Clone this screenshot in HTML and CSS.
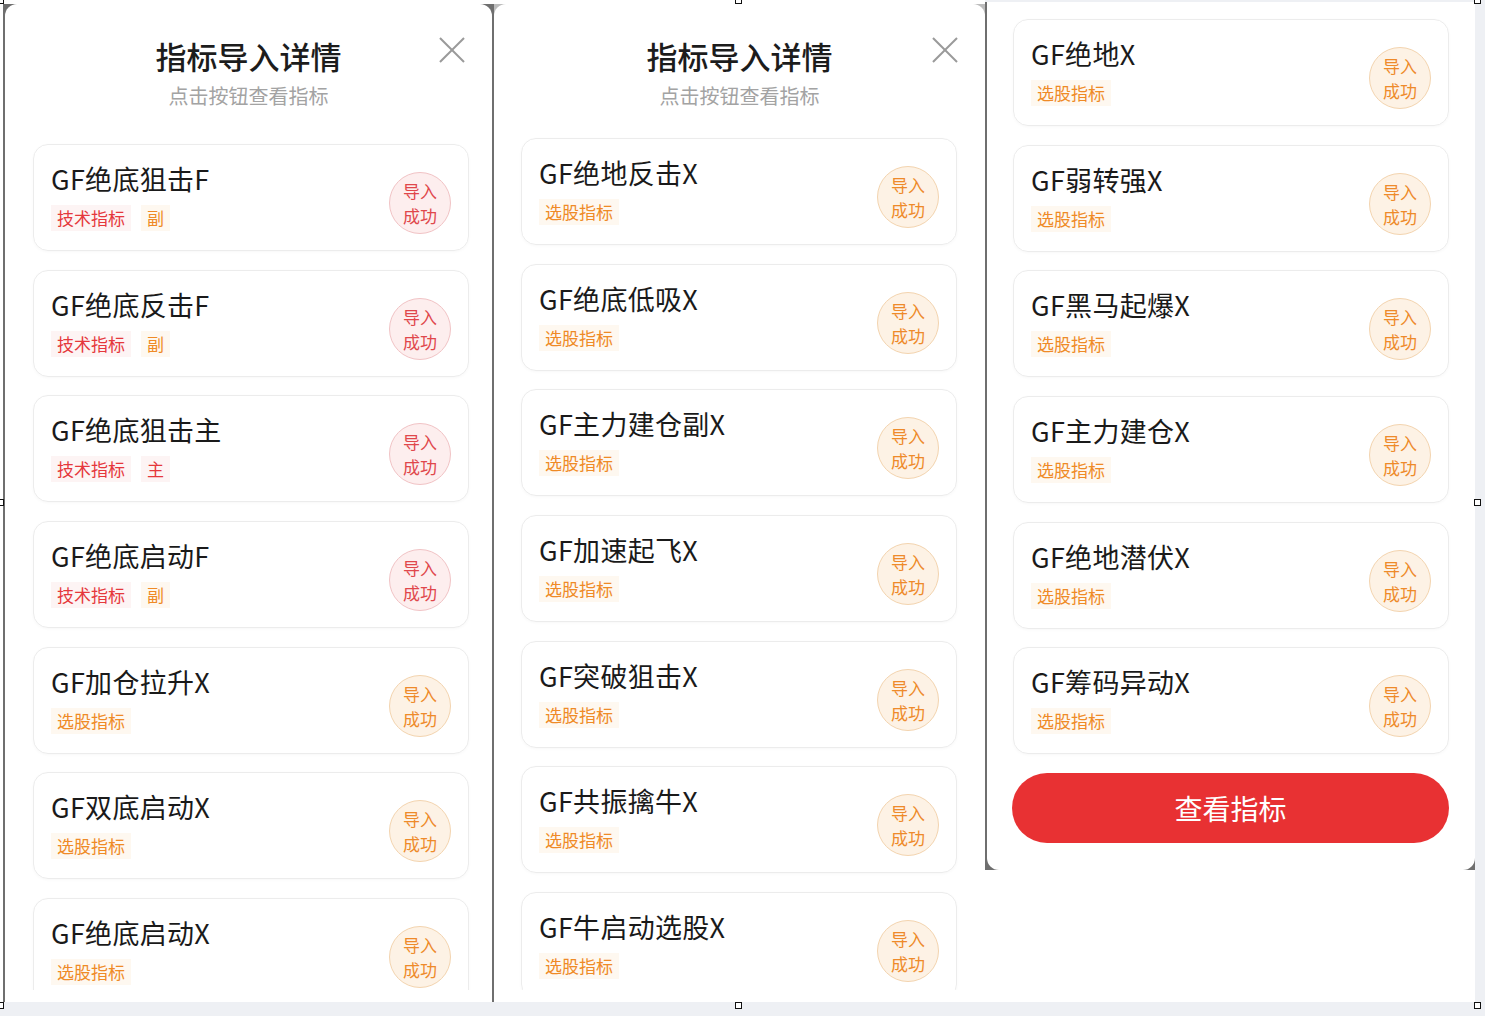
FILE: index.html
```html
<!DOCTYPE html>
<html lang="zh-CN">
<head>
    <meta charset="UTF-8">
    <title>指标导入详情</title>
    <link rel="stylesheet" href="styles.css">
</head>
<body>

<div class="frame">
    <!-- 第一屏 -->
    <div class="shot shot-a">
        <div class="sheet">
            <div class="sheet-head">
                <h2>指标导入详情</h2>
                <p>点击按钮查看指标</p>
                <span class="close"></span>
            </div>
            <div class="list list-a">
                <div class="card">
                    <div class="card-info">
                        <div class="card-name">GF绝底狙击F</div>
                        <div class="tags"><span class="tag red">技术指标</span><span class="tag orange">副</span></div>
                    </div>
                    <div class="badge red">导入<br>成功</div>
                </div>
                <div class="card">
                    <div class="card-info">
                        <div class="card-name">GF绝底反击F</div>
                        <div class="tags"><span class="tag red">技术指标</span><span class="tag orange">副</span></div>
                    </div>
                    <div class="badge red">导入<br>成功</div>
                </div>
                <div class="card">
                    <div class="card-info">
                        <div class="card-name">GF绝底狙击主</div>
                        <div class="tags"><span class="tag red">技术指标</span><span class="tag red">主</span></div>
                    </div>
                    <div class="badge red">导入<br>成功</div>
                </div>
                <div class="card">
                    <div class="card-info">
                        <div class="card-name">GF绝底启动F</div>
                        <div class="tags"><span class="tag red">技术指标</span><span class="tag orange">副</span></div>
                    </div>
                    <div class="badge red">导入<br>成功</div>
                </div>
                <div class="card">
                    <div class="card-info">
                        <div class="card-name">GF加仓拉升X</div>
                        <div class="tags"><span class="tag orange">选股指标</span></div>
                    </div>
                    <div class="badge orange">导入<br>成功</div>
                </div>
                <div class="card">
                    <div class="card-info">
                        <div class="card-name">GF双底启动X</div>
                        <div class="tags"><span class="tag orange">选股指标</span></div>
                    </div>
                    <div class="badge orange">导入<br>成功</div>
                </div>
                <div class="card">
                    <div class="card-info">
                        <div class="card-name">GF绝底启动X</div>
                        <div class="tags"><span class="tag orange">选股指标</span></div>
                    </div>
                    <div class="badge orange">导入<br>成功</div>
                </div>
            </div>
        </div>
    </div>

    <!-- 第二屏 -->
    <div class="shot shot-b">
        <div class="sheet">
            <div class="sheet-head">
                <h2>指标导入详情</h2>
                <p>点击按钮查看指标</p>
                <span class="close"></span>
            </div>
            <div class="list list-b">
                <div class="card">
                    <div class="card-info">
                        <div class="card-name">GF绝地反击X</div>
                        <div class="tags"><span class="tag orange">选股指标</span></div>
                    </div>
                    <div class="badge orange">导入<br>成功</div>
                </div>
                <div class="card">
                    <div class="card-info">
                        <div class="card-name">GF绝底低吸X</div>
                        <div class="tags"><span class="tag orange">选股指标</span></div>
                    </div>
                    <div class="badge orange">导入<br>成功</div>
                </div>
                <div class="card">
                    <div class="card-info">
                        <div class="card-name">GF主力建仓副X</div>
                        <div class="tags"><span class="tag orange">选股指标</span></div>
                    </div>
                    <div class="badge orange">导入<br>成功</div>
                </div>
                <div class="card">
                    <div class="card-info">
                        <div class="card-name">GF加速起飞X</div>
                        <div class="tags"><span class="tag orange">选股指标</span></div>
                    </div>
                    <div class="badge orange">导入<br>成功</div>
                </div>
                <div class="card">
                    <div class="card-info">
                        <div class="card-name">GF突破狙击X</div>
                        <div class="tags"><span class="tag orange">选股指标</span></div>
                    </div>
                    <div class="badge orange">导入<br>成功</div>
                </div>
                <div class="card">
                    <div class="card-info">
                        <div class="card-name">GF共振擒牛X</div>
                        <div class="tags"><span class="tag orange">选股指标</span></div>
                    </div>
                    <div class="badge orange">导入<br>成功</div>
                </div>
                <div class="card">
                    <div class="card-info">
                        <div class="card-name">GF牛启动选股X</div>
                        <div class="tags"><span class="tag orange">选股指标</span></div>
                    </div>
                    <div class="badge orange">导入<br>成功</div>
                </div>
            </div>
        </div>
    </div>

    <!-- 第三屏 -->
    <div class="shot shot-c">
        <div class="sheet">
            <div class="list list-c">
                <div class="card">
                    <div class="card-info">
                        <div class="card-name">GF绝地X</div>
                        <div class="tags"><span class="tag orange">选股指标</span></div>
                    </div>
                    <div class="badge orange">导入<br>成功</div>
                </div>
                <div class="card">
                    <div class="card-info">
                        <div class="card-name">GF弱转强X</div>
                        <div class="tags"><span class="tag orange">选股指标</span></div>
                    </div>
                    <div class="badge orange">导入<br>成功</div>
                </div>
                <div class="card">
                    <div class="card-info">
                        <div class="card-name">GF黑马起爆X</div>
                        <div class="tags"><span class="tag orange">选股指标</span></div>
                    </div>
                    <div class="badge orange">导入<br>成功</div>
                </div>
                <div class="card">
                    <div class="card-info">
                        <div class="card-name">GF主力建仓X</div>
                        <div class="tags"><span class="tag orange">选股指标</span></div>
                    </div>
                    <div class="badge orange">导入<br>成功</div>
                </div>
                <div class="card">
                    <div class="card-info">
                        <div class="card-name">GF绝地潜伏X</div>
                        <div class="tags"><span class="tag orange">选股指标</span></div>
                    </div>
                    <div class="badge orange">导入<br>成功</div>
                </div>
                <div class="card">
                    <div class="card-info">
                        <div class="card-name">GF筹码异动X</div>
                        <div class="tags"><span class="tag orange">选股指标</span></div>
                    </div>
                    <div class="badge orange">导入<br>成功</div>
                </div>
                <button class="view-btn">查看指标</button>
            </div>
        </div>
    </div>
</div>

<!-- 编辑器的缩放手柄 -->
<span class="handle h-tl"></span>
<span class="handle h-tm"></span>
<span class="handle h-tr"></span>
<span class="handle h-ml"></span>
<span class="handle h-mr"></span>
<span class="handle h-bl"></span>
<span class="handle h-bm"></span>
<span class="handle h-br"></span>

</body>
</html>
```

FILE: styles.css
```css
body {
    margin: 0;
    background-color: #eef0f4;
    font-family: "Noto Sans CJK SC", "Noto Sans", sans-serif;
    width: 1485px;
    height: 1016px;
    position: relative;
    overflow: hidden;
}

.frame {
    width: 1475px;
    height: 1002px;
    background-color: #fff;
    display: flex;
    align-items: flex-start;
    padding-left: 3px;
    box-sizing: border-box;
}

/* 每一屏的截图 */
.shot {
    background-color: #6f6f6f;
    display: flex;
    box-sizing: border-box;
}

.shot-a {
    width: 489px;
    height: 998px;
    margin-top: 4px;
    padding-left: 2px;
}

.shot-b {
    width: 493px;
    height: 998px;
    margin-top: 4px;
    padding-left: 2px;
    background: linear-gradient(to right, #6f6f6f 0, #6f6f6f 2px, #bdbdbd 2px);
}

.shot-c {
    width: 490px;
    height: 870px;
    padding-left: 2px;
    padding-top: 2px;
    background: linear-gradient(#eef0f4 0, #eef0f4 2px, #6f6f6f 2px);
}

.sheet {
    flex: 1;
    background-color: #fff;
    border-radius: 12px 12px 0 0;
    display: flex;
    flex-direction: column;
    overflow: hidden;
}

.shot-c .sheet {
    border-radius: 0 0 12px 12px;
}

.sheet-head {
    position: relative;
    text-align: center;
    padding-top: 32px;
    height: 82px;
}

.sheet-head h2 {
    margin: 0;
    font-size: 31px;
    line-height: 40px;
    font-weight: 500;
    color: #1c1c1c;
}

.sheet-head p {
    margin: 6px 0 0;
    font-size: 20px;
    line-height: 28px;
    color: #a3a3a3;
}

.close {
    position: absolute;
    top: 34px;
    right: 28px;
    width: 24px;
    height: 24px;
}

.close::before,
.close::after {
    content: "";
    position: absolute;
    left: -5px;
    top: 11px;
    width: 34px;
    height: 2px;
    background-color: #9a9a9a;
    transform: rotate(45deg);
}

.close::after {
    transform: rotate(-45deg);
}

/* 列表 */
.list {
    display: flex;
    flex-direction: column;
    gap: 18.7px;
    overflow: hidden;
    box-sizing: border-box;
}

.list-a {
    padding: 26px 23px 0 28px;
    height: 872px;
}

.list-b {
    padding: 20px 28px 0 27px;
    height: 872px;
}

.list-c {
    padding: 17px 26px 0 26px;
}

.card {
    flex-shrink: 0;
    height: 107px;
    box-sizing: border-box;
    border: 1px solid #ececec;
    border-radius: 15px;
    padding: 17px;
    display: flex;
    justify-content: space-between;
    box-shadow: 0 1px 3px rgba(0, 0, 0, 0.03);
}

.card-name {
    font-size: 27px;
    line-height: 34px;
    color: #1a1a1a;
    letter-spacing: 0.3px;
}

.tags {
    display: flex;
    gap: 10px;
    margin-top: 9px;
}

.tag {
    font-size: 17px;
    line-height: 26px;
    padding: 0 6px;
}

.tag.red {
    color: #e5383c;
    background-color: #fdf4f4;
}

.tag.orange {
    color: #ef8a26;
    background-color: #fef8f0;
}

.badge {
    align-self: flex-end;
    width: 60px;
    height: 60px;
    border-radius: 50%;
    margin-bottom: -1px;
    display: flex;
    align-items: center;
    justify-content: center;
    text-align: center;
    font-size: 17px;
    line-height: 25px;
}

.badge.red {
    color: #e0474b;
    background-color: #fdeeee;
    border: 1px solid #f1c3c5;
}

.badge.orange {
    color: #ee8a2a;
    background-color: #fdf2e5;
    border: 1px solid #f3d4af;
}

.view-btn {
    height: 70px;
    margin-left: -1px;
    border: none;
    border-radius: 35px;
    background-color: #e83133;
    color: #fff;
    font-family: inherit;
    font-size: 28px;
}

/* 缩放手柄 */
.handle {
    position: absolute;
    width: 5px;
    height: 5px;
    border: 1px solid #111;
    background-color: #fff;
}

.h-tl { left: -3px; top: -3px; }
.h-tm { left: 735px; top: -3px; }
.h-tr { left: 1474px; top: -3px; }
.h-ml { left: -3px; top: 499px; }
.h-mr { left: 1474px; top: 499px; }
.h-bl { left: -3px; top: 1002px; }
.h-bm { left: 735px; top: 1002px; }
.h-br { left: 1474px; top: 1002px; }
```
